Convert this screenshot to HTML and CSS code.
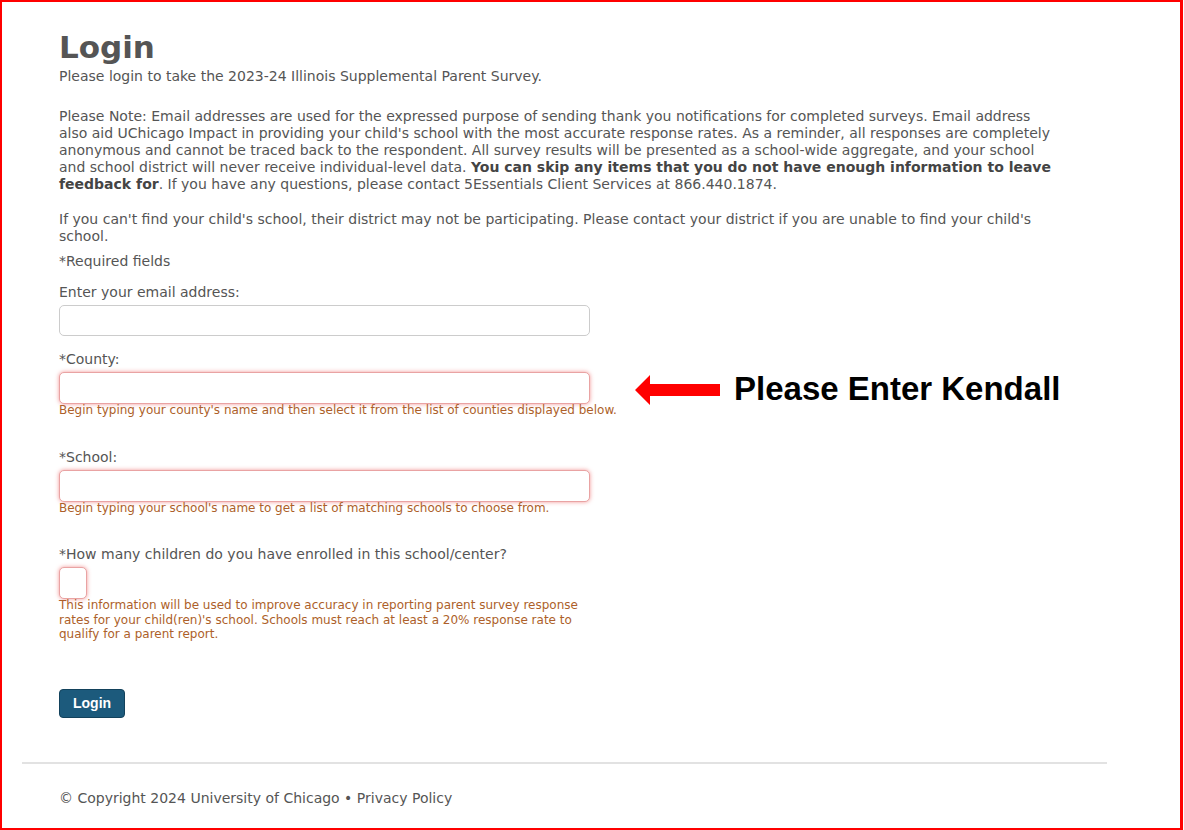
FILE: index.html
```html
<!DOCTYPE html>
<html lang="en">
<head>
    <meta charset="UTF-8">
    <meta name="viewport" content="width=device-width, initial-scale=1.0">
    <title>Login</title>
    <link rel="stylesheet" href="styles.css">
</head>
<body>
    <div class="frame">
        <div class="container">
            <h1>Login</h1>
            <p class="intro">Please login to take the 2023-24 Illinois Supplemental Parent Survey.</p>

            <p class="note">Please Note: Email addresses are used for the expressed purpose of sending thank you notifications for completed surveys. Email address also aid UChicago Impact in providing your child's school with the most accurate response rates. As a reminder, all responses are completely anonymous and cannot be traced back to the respondent. All survey results will be presented as a school-wide aggregate, and your school and school district will never receive individual-level data. <strong>You can skip any items that you do not have enough information to leave feedback for</strong>. If you have any questions, please contact 5Essentials Client Services at 866.440.1874.</p>

            <p class="note">If you can't find your child's school, their district may not be participating. Please contact your district if you are unable to find your child's school.</p>

            <p class="required">*Required fields</p>

            <form class="login-form" onsubmit="return false;">
                <div class="field">
                    <label for="email">Enter your email address:</label>
                    <input type="text" id="email" class="text-input">
                </div>

                <div class="field">
                    <label for="county">*County:</label>
                    <div class="field-row">
                        <input type="text" id="county" class="text-input invalid">
                        <div class="callout">
                            <svg class="arrow" width="86" height="30" viewBox="0 0 86 30">
                                <polygon points="0,15 15,0 15,9 85,9 85,21 15,21 15,30" fill="#ff0000"/>
                            </svg>
                            <span class="callout-text">Please Enter Kendall</span>
                        </div>
                    </div>
                    <div class="help">Begin typing your county's name and then select it from the list of counties displayed below.</div>
                </div>

                <div class="field spaced">
                    <label for="school">*School:</label>
                    <input type="text" id="school" class="text-input invalid">
                    <div class="help">Begin typing your school's name to get a list of matching schools to choose from.</div>
                </div>

                <div class="field spaced">
                    <label for="children">*How many children do you have enrolled in this school/center?</label>
                    <input type="text" id="children" class="text-input small invalid">
                    <div class="help wide">This information will be used to improve accuracy in reporting parent survey response rates for your child(ren)'s school. Schools must reach at least a 20% response rate to qualify for a parent report.</div>
                </div>

                <button type="submit" class="btn-login">Login</button>
            </form>
        </div>

        <footer class="footer">
            <p>&copy; Copyright 2024 University of Chicago &bull; Privacy Policy</p>
        </footer>
    </div>
</body>
</html>
```

FILE: styles.css
```css
body {
    margin: 0;
    background-color: #fff;
    font-family: 'DejaVu Sans', Verdana, sans-serif;
    font-size: 14px;
    color: #555;
}

.frame {
    width: 1183px;
    height: 830px;
    box-sizing: border-box;
    border: 2px solid #ff0000;
    border-right-width: 3px;
    overflow: hidden;
}

.container {
    padding: 24px 0 0 57px;
    width: 1000px;
}

h1 {
    font-size: 31px;
    font-weight: bold;
    color: #555;
    margin: 0;
    line-height: 42px;
}

p {
    margin: 0;
    line-height: 17px;
}

.intro {
    margin-bottom: 23px;
}

.note {
    margin-bottom: 18px;
}

.note strong {
    color: #444;
}

.required {
    margin-top: -10px;
    margin-bottom: 14px;
}

.field {
    display: flex;
    flex-direction: column;
    align-items: flex-start;
    margin-bottom: 15px;
}

.field.spaced {
    margin-top: 31px;
}

label {
    line-height: 17px;
    margin-bottom: 4px;
}

.field-row {
    display: flex;
    align-items: center;
    height: 32px;
}

.text-input {
    width: 531px;
    height: 31px;
    box-sizing: border-box;
    border: 1px solid #ccc;
    border-radius: 5px;
    padding: 4px 8px;
    font-size: 14px;
    background: #fff;
}

.text-input.invalid {
    border-color: #e9a3a3;
    box-shadow: 0 0 4px rgba(235, 80, 80, 0.6);
    height: 32px;
}

.text-input.small {
    width: 28px;
}

.help {
    font-size: 12px;
    line-height: 14.5px;
    color: #ad5f2a;
    margin-top: -1px;
}

.help.wide {
    width: 525px;
}

.callout {
    display: flex;
    align-items: center;
    flex-shrink: 0;
    height: 32px;
    margin-left: 45px;
}

.arrow {
    display: block;
    margin-top: 3px;
}

.callout-text {
    font-family: 'Liberation Sans', Arial, sans-serif;
    font-weight: bold;
    font-size: 33px;
    line-height: 32px;
    white-space: nowrap;
    color: #000;
    margin-left: 13px;
    padding-top: 2px;
}

.btn-login {
    display: block;
    margin-top: 47px;
    height: 29px;
    padding: 0 13px;
    font-family: 'Liberation Sans', Arial, sans-serif;
    font-size: 14px;
    font-weight: bold;
    color: #fff;
    background-color: #1c5a7c;
    border: 1px solid #13425c;
    border-radius: 4px;
    cursor: pointer;
}

.footer {
    margin: 44px 0 0 20px;
    width: 1085px;
    box-sizing: border-box;
    border-top: 2px solid #e2e2e2;
    padding: 26px 0 0 37px;
}
```
